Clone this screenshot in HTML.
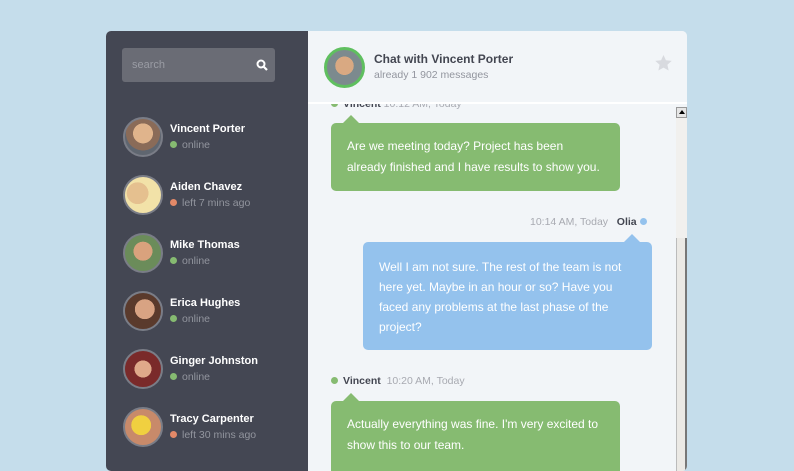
<!DOCTYPE html>
<html><head><style>
*{margin:0;padding:0;box-sizing:border-box}
body{width:794px;height:465px;background:#c5ddeb;font-family:"Liberation Sans",sans-serif;position:relative;overflow:hidden}
.c{position:absolute;left:106px;top:31px;width:581px;height:440px;border-radius:5px;overflow:hidden;background:#f2f5f8}
.sb{position:absolute;left:0;top:0;width:202px;height:100%;background:#444753}
.search{position:absolute;left:16px;top:17px;width:153px;height:34px;background:#6a6c75;border-radius:3px;color:#9a9ca4;font-size:11px;padding:11px 10px}
.av{position:absolute;width:40px;height:40px;border-radius:50%;border:2px solid #7a7d87;background:radial-gradient(circle at 50% 40%,#e0b48c 0 35%,#8a6b58 36% 60%,#5f6670 61%)}
.nm{position:absolute;left:64px;color:#fff;font-size:11px;font-weight:bold}
.st{position:absolute;left:64px;color:#92959e;font-size:10.5px}
.dot{display:inline-block;width:7px;height:7px;border-radius:50%;margin-right:5px;vertical-align:0}
.g{background:#86bb71}.o{background:#e38968}.b{background:#94c2ed}
.hd{position:absolute;left:202px;top:0;width:379px;height:73px;background:#f2f5f8;border-bottom:2px solid #fff}
.msg{position:absolute;color:#fff;font-size:12px;line-height:21px;border-radius:5px;padding:13px 16px}
.msg:after{content:"";position:absolute;top:-8px;border:8px solid transparent;border-top:0}
.gm{background:#86bb71;width:289px}
.gm:after{left:12px;border-bottom-color:#86bb71}
.bm{background:#94c2ed;width:289px}
.bm:after{right:12px;border-bottom-color:#94c2ed}
.meta{position:absolute;font-size:10.5px;color:#a8aab1}
.meta b{color:#434651}
</style></head><body>
<div class="c">
<div class="sb">
<div class="search">search<svg style="position:absolute;right:7px;top:11px" width="12" height="12" viewBox="0 0 12 12"><circle cx="5" cy="5" r="3.5" fill="none" stroke="#fff" stroke-width="2"/><path d="M7.5 7.5L11 11" stroke="#fff" stroke-width="2.2"/></svg></div>
<div class="av" style="left:17px;top:86px"></div><div class="nm" style="top:92px">Vincent Porter</div><div class="st" style="top:108px"><span class="dot g"></span>online</div>
<div class="av" style="left:17px;top:144px;background:radial-gradient(circle at 35% 45%,#e5c08f 0 35%,#f2e2a8 36%)"></div><div class="nm" style="top:150px">Aiden Chavez</div><div class="st" style="top:166px"><span class="dot o"></span>left 7 mins ago</div>
<div class="av" style="left:17px;top:202px;background:radial-gradient(circle at 50% 45%,#d9a27d 0 35%,#6b8c5a 36%)"></div><div class="nm" style="top:208px">Mike Thomas</div><div class="st" style="top:224px"><span class="dot g"></span>online</div>
<div class="av" style="left:17px;top:260px;background:radial-gradient(circle at 55% 45%,#d8a383 0 35%,#5a3a2c 36%)"></div><div class="nm" style="top:266px">Erica Hughes</div><div class="st" style="top:282px"><span class="dot g"></span>online</div>
<div class="av" style="left:17px;top:318px;background:radial-gradient(circle at 50% 50%,#e0a98a 0 33%,#7a2a2a 34%)"></div><div class="nm" style="top:324px">Ginger Johnston</div><div class="st" style="top:340px"><span class="dot g"></span>online</div>
<div class="av" style="left:17px;top:376px;background:radial-gradient(circle at 45% 45%,#f0d040 0 35%,#c88a6a 36%)"></div><div class="nm" style="top:382px">Tracy Carpenter</div><div class="st" style="top:398px"><span class="dot o"></span>left 30 mins ago</div>
</div>
<div class="meta" style="left:225px;top:67px"><span class="dot g"></span><b>Vincent</b> 10:12 AM, Today</div>
<div class="hd">
<div class="av" style="left:16px;top:16px;width:41px;height:41px;border:3px solid #5fbf5f;background:radial-gradient(circle at 50% 45%,#d9a982 0 35%,#7c8a8e 36%)"></div>
<div style="position:absolute;left:66px;top:21px;font-size:12px;font-weight:bold;color:#434651">Chat with Vincent Porter</div>
<div style="position:absolute;left:66px;top:38px;font-size:10.5px;color:#92959e">already 1 902 messages</div>
<svg style="position:absolute;left:347px;top:24px" width="17" height="16" viewBox="0 0 24 23"><path d="M12 0l3.5 7.6 8.3.9-6.2 5.6 1.8 8.2L12 18.1l-7.4 4.2 1.8-8.2L.2 8.5l8.3-.9z" fill="#d8dadf"/></svg>
</div>
<div class="msg gm" style="left:225px;top:92px;height:68px">Are we meeting today? Project has been already finished and I have results to show you.</div>
<div class="meta" style="left:424px;top:185px">10:14 AM, Today &nbsp;&nbsp;<b>Olia</b> <span class="dot b" style="margin:0"></span></div>
<div class="msg bm" style="left:257px;top:211px;height:108px;line-height:20px;padding-top:15px">Well I am not sure. The rest of the team is not here yet. Maybe in an hour or so? Have you faced any problems at the last phase of the project?</div>
<div class="meta" style="left:225px;top:344px"><span class="dot g"></span><b>Vincent</b> &nbsp;10:20 AM, Today</div>
<div class="msg gm" style="left:225px;top:370px;height:80px">Actually everything was fine. I'm very excited to show this to our team.</div>
<div style="position:absolute;left:570px;top:76px;width:11px;height:364px;background:#f1f0ee"></div>
<div style="position:absolute;left:570px;top:76px;width:11px;height:11px;background:#e6e6e6;border:1px solid #999"><div style="margin:2px auto 0;width:0;height:0;border:3px solid transparent;border-top:0;border-bottom:4px solid #000"></div></div>
<div style="position:absolute;left:570px;top:207px;width:11px;height:240px;background:#ebe9e5;border-left:1px solid #bbb;border-right:2px solid #777"></div>
</div>
</body></html>
